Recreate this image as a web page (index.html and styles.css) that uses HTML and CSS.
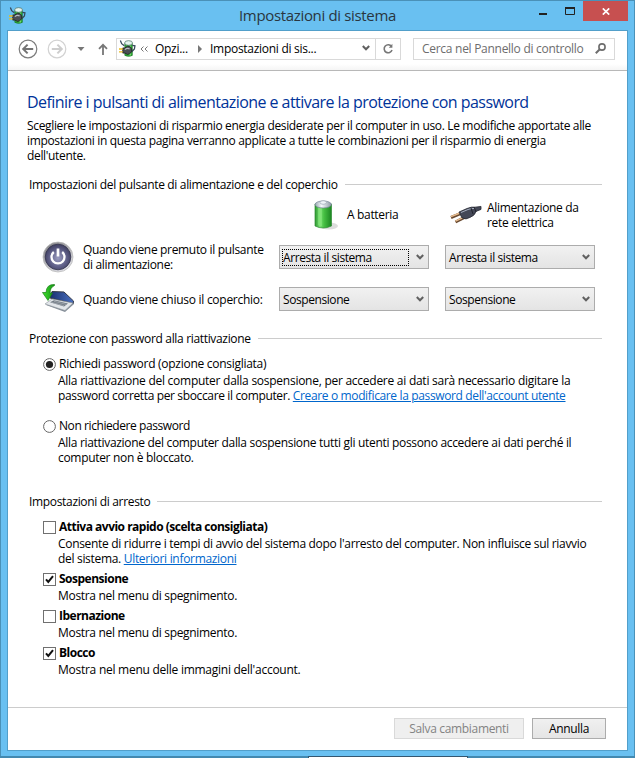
FILE: index.html
```html
<!DOCTYPE html>
<html lang="it">
<head>
<meta charset="utf-8">
<title>Impostazioni di sistema</title>
<link rel="stylesheet" href="styles.css">
</head>
<body>
<svg class="defs" width="0" height="0" aria-hidden="true">
  <defs>
    <linearGradient id="green" x1="0" x2="1"><stop offset="0" stop-color="#2a962e"/><stop offset=".3" stop-color="#7be274"/><stop offset=".55" stop-color="#45bf42"/><stop offset="1" stop-color="#1b8521"/></linearGradient>
    <linearGradient id="steel" x1="0" x2="1"><stop offset="0" stop-color="#9aa7b0"/><stop offset=".4" stop-color="#f4f8fc"/><stop offset="1" stop-color="#8b98a3"/></linearGradient>
    <linearGradient id="ring" x1="0" y1="0" x2=".6" y2="1"><stop offset="0" stop-color="#77777b"/><stop offset="1" stop-color="#dedee4"/></linearGradient>
    <radialGradient id="orb" cx=".5" cy=".55" r=".6"><stop offset="0" stop-color="#9a9cc0"/><stop offset=".6" stop-color="#5c5c84"/><stop offset="1" stop-color="#383858"/></radialGradient>
    <linearGradient id="screen" x1="0" x2="1"><stop offset="0" stop-color="#18306f"/><stop offset="1" stop-color="#4a70c0"/></linearGradient>
    <linearGradient id="arrowfill" x1="0" x2="1"><stop offset="0" stop-color="#3fe02c"/><stop offset="1" stop-color="#159316"/></linearGradient>
    <symbol id="power-plan" viewBox="0 0 16 16">
      <path d="M5.500 3v11.500q3.500 1.800 7 0V3z" fill="#2fb53a" stroke="#14661b" stroke-width=".6"/>
      <path d="M10.500 5.500v9" stroke="#86e57d" stroke-width="1.200"/>
      <ellipse cx="9" cy="2.800" rx="3.700" ry="2.200" fill="#e3f4ee" stroke="#52766a" stroke-width=".7"/>
      <path d="M1.300.500 2.500 3.500 5 5.500M12.500 5l2.500.500-.5 3-2.500 2.500" fill="none" stroke="#36485a" stroke-width="1.200"/>
      <path d="M3.500 7.500h2l2.500-1.700q4 .2 4 3.600t-4 4.200l-2.500-1.300h-2z" fill="#4b4e54" stroke="#222" stroke-width=".8"/>
      <path d="M5.500 9q2.500-2 4.500-.5" fill="none" stroke="#b7bcc1"/>
      <path d="M0 8.500h3.500M0 11.200h3.500" stroke="#e9bb1c" stroke-width="1.300"/>
    </symbol>
    <symbol id="chevron" viewBox="0 0 8 7"><path d="M.8 1 4 4.300 7.200 1" fill="none" stroke="#606060" stroke-width="2"/></symbol>
  </defs>
</svg>
<div class="desktop">
  <div class="window">
    <header class="titlebar">
      <svg class="app-icon" width="17" height="17"><use href="#power-plan"/></svg>
      <h1 class="window-title">Impostazioni di sistema</h1>
      <div class="caption">
        <svg class="min" width="8" height="2"><path d="M0 1h8" stroke="#222" stroke-width="2"/></svg>
        <svg class="max" width="10" height="8"><path d="M.5 1h9v6.500h-9z" fill="none" stroke="#222"/><path d="M0 1h10" stroke="#222" stroke-width="2"/></svg>
        <span class="close"><svg width="8" height="7" viewBox="0 0 8 7"><path d="m.8.4 6.400 6.200M7.200.4.8 6.600" stroke="#fff" stroke-width="1.700"/></svg></span>
      </div>
    </header>
    <div class="client">
      <nav class="navbar">
        <svg width="20" height="20"><circle cx="10" cy="10" r="8.800" fill="none" stroke="#7c7c7c" stroke-width="1.200"/><path d="M15.200 10H5.600M9.600 5.600 5.200 10l4.400 4.400" fill="none" stroke="#737373" stroke-width="2"/></svg>
        <svg class="forward" width="20" height="20"><circle cx="10" cy="10" r="8.800" fill="none" stroke="#d2d2d2" stroke-width="1.200"/><path d="M4.800 10h9.600m-4-4.400 4.400 4.400-4.400 4.400" fill="none" stroke="#cdcdcd" stroke-width="2"/></svg>
        <svg class="history" width="8" height="4"><path d="M.5 0h7L4 4z" fill="#777"/></svg>
        <svg class="up" width="10" height="12"><path d="M5 12V1.800M1 5.800l4-4 4 4" fill="none" stroke="#777" stroke-width="1.800"/></svg>
        <div class="address">
          <svg class="address-icon" width="17" height="17"><use href="#power-plan"/></svg>
          <svg class="more" width="8" height="6"><path d="M3.500.5 1 3l2.500 2.500M7.500.5 5 3l2.500 2.500" fill="none" stroke="#777"/></svg>
          <span class="crumb first">Opzi...</span>
          <svg class="sep" width="4" height="8"><path d="M0 0v8l4-4z" fill="#777"/></svg>
          <span class="crumb second">Impostazioni di sis...</span>
          <svg class="drop" width="8" height="7"><use href="#chevron"/></svg>
          <span class="refresh"><svg width="12" height="12"><path d="M9.500 3.500A4 4 0 1 0 10 7" fill="none" stroke="#777" stroke-width="1.600"/><path d="M6.800 4.800h3.600V.8z" fill="#777"/></svg></span>
        </div>
        <div class="search"><span>Cerca nel Pannello di controllo</span>
          <svg width="11" height="11"><circle cx="7" cy="4" r="3.100" fill="none" stroke="#6d6d6d" stroke-width="1.600"/><path d="M4.800 6.200.8 10.300" stroke="#6d6d6d" stroke-width="2"/></svg>
        </div>
      </nav>
      <main class="content">
        <h2 class="heading">Definire i pulsanti di alimentazione e attivare la protezione con password</h2>
        <p class="intro">Scegliere le impostazioni di risparmio energia desiderate per il computer in uso. Le modifiche apportate alle<br>impostazioni in questa pagina verranno applicate a tutte le combinazioni per il risparmio di energia<br>dell'utente.</p>

        <h3 class="group buttons-group">Impostazioni del pulsante di alimentazione e del coperchio</h3>
        <div class="power-grid">
          <div class="source battery">
            <svg width="26" height="32"><ellipse cx="16" cy="27" rx="9" ry="3.500" fill="#ddd"/><path d="M2 5v22q8 4 16.500 0V5z" fill="url(#green)" stroke="#2e8b34" stroke-width=".7"/><path d="M5 8v18q2 1.200 4 1V9z" fill="#8aea80" opacity=".55"/><ellipse cx="10.200" cy="5.500" rx="8.200" ry="3.500" fill="url(#steel)" stroke="#718293" stroke-width=".7"/><ellipse cx="10.200" cy="3.500" rx="3.200" ry="1.800" fill="#eef3f8" stroke="#8e9cab" stroke-width=".6"/></svg>
            <span>A batteria</span>
          </div>
          <div class="source mains">
            <svg width="33" height="19"><path d="M2 12.500 12 8.300M6.500 17 16 12.200" stroke="#694a31" stroke-width="3"/><path d="m2 11.700 9-3.700M6.500 16.200l9-4.300" stroke="#e9be91" stroke-width="1.400"/><path d="M10 7 18 3.500q5-2 8-1.300l6-.8v3l-5 2q-1 4-6 6l-4 1.500-4-1z" fill="#444857" stroke="#272a34" stroke-width=".8"/><path d="m12 7.500 7-3q4-1.700 7-.9" stroke="#a6aebe" fill="none"/><path d="m22 3 2 6m1-7 2 5" stroke="#20232c"/></svg>
            <span>Alimentazione da<br>rete elettrica</span>
          </div>
          <svg class="row-icon" width="33" height="33"><circle cx="16" cy="16" r="15" fill="url(#ring)" stroke="#bbb" stroke-width=".8"/><circle cx="16" cy="16" r="12.800" fill="url(#orb)" stroke="#35354d" stroke-width=".8"/><path d="M11.800 11a6.500 6.500 0 1 0 8.400 0" fill="none" stroke="#fff" stroke-width="2.300"/><path d="M16 7.500v8" stroke="#fff" stroke-width="2.700"/></svg>
          <span class="row-label">Quando viene premuto il pulsante<br>di alimentazione:</span>
          <div class="select focused"><span>Arresta il sistema</span><svg width="8" height="7"><use href="#chevron"/></svg></div>
          <div class="select"><span>Arresta il sistema</span><svg width="8" height="7"><use href="#chevron"/></svg></div>
          <svg class="row-icon" width="33" height="30"><path d="m4 21 19 7 9-8v-2L11 15z" fill="#858e98"/><path d="m10 7.500 12 .5 9.500 9-.5 2.500L8 14z" fill="url(#screen)" stroke="#343a48"/><path d="m3 20 7-5L31 19l-8 7.500z" fill="#e2e6ea" stroke="#8c949b" stroke-width=".6"/><path d="m8 18.300 4-2 14 3.200-4 3z" fill="#727b85"/><path d="m10 18.500 12 3.200M12 17.300l12 3" stroke="#b4bac1" stroke-width=".6"/><path d="M12.500.5Q4.500 0 4 8.500H.5l5.500 8 4.500-7.500H8Q8 3.500 12.500 1.500z" fill="url(#arrowfill)" stroke="#187d17" stroke-width=".7"/></svg>
          <span class="row-label lid-label">Quando viene chiuso il coperchio:</span>
          <div class="select"><span>Sospensione</span><svg width="8" height="7"><use href="#chevron"/></svg></div>
          <div class="select"><span>Sospensione</span><svg width="8" height="7"><use href="#chevron"/></svg></div>
        </div>

        <h3 class="group password-group">Protezione con password alla riattivazione</h3>
        <div class="option radio-option">
          <svg width="13" height="13"><circle cx="6.500" cy="6.500" r="5.900" fill="#fff" stroke="#666"/><circle cx="6.500" cy="6.500" r="3.600" fill="#222"/></svg>
          <span class="name">Richiedi password (opzione consigliata)</span>
          <p><span class="loose">Alla riattivazione del computer dalla sospensione, per accedere ai dati sarà necessario digitare la</span><br><span class="tight">password corretta per sboccare il computer. <a>Creare o modificare la password dell'account utente</a></span></p>
        </div>
        <div class="option radio-option second-radio">
          <svg width="13" height="13"><circle cx="6.500" cy="6.500" r="5.900" fill="#fff" stroke="#666"/></svg>
          <span class="name">Non richiedere password</span>
          <p>Alla riattivazione del computer dalla sospensione tutti gli utenti possono accedere ai dati perché il<br>computer non è bloccato.</p>
        </div>

        <h3 class="group shutdown-group">Impostazioni di arresto</h3>
        <div class="option check-option">
          <span class="box"></span>
          <span class="name">Attiva avvio rapido (scelta consigliata)</span>
          <p>Consente di ridurre i tempi di avvio del sistema dopo l'arresto del computer. Non influisce sul riavvio<br>del sistema. <a>Ulteriori informazioni</a></p>
        </div>
        <div class="option check-option">
          <span class="box"><svg width="11" height="11"><path d="M2 5.300 4.300 8 9 2.200" fill="none" stroke="#111" stroke-width="2"/></svg></span>
          <span class="name">Sospensione</span>
          <p>Mostra nel menu di spegnimento.</p>
        </div>
        <div class="option check-option">
          <span class="box"></span>
          <span class="name">Ibernazione</span>
          <p>Mostra nel menu di spegnimento.</p>
        </div>
        <div class="option check-option">
          <span class="box"><svg width="11" height="11"><path d="M2 5.300 4.300 8 9 2.200" fill="none" stroke="#111" stroke-width="2"/></svg></span>
          <span class="name">Blocco</span>
          <p class="loose">Mostra nel menu delle immagini dell'account.</p>
        </div>
      </main>
      <footer class="footer">
        <span class="button disabled">Salva cambiamenti</span>
        <span class="button cancel">Annulla</span>
      </footer>
    </div>
  </div>
  <div class="backdrop"><span></span></div>
</div>
</body>
</html>
```
FILE: styles.css
```css
* { box-sizing: border-box; }
body {
  margin: 0;
  font: 12px/15px "Open Sans", "Noto Sans", sans-serif;
  letter-spacing: -0.33px;
  color: #000;
  white-space: nowrap;
}
h1, h2, h3, p { margin: 0; font-weight: 400; font-size: inherit; }
svg { display: block; flex: none; }
.defs { position: absolute; }
.desktop { width: 635px; height: 758px; overflow: hidden; background: #4389b0; }
.window {
  height: 756px;
  padding: 0 6px 5px;
  border: 1px solid #4a91b8;
  border-bottom: 0;
  background: #69c0f1;
}
.titlebar { display: flex; height: 29px; }
.app-icon { margin: 6px 0 0 2px; }
.window-title { flex: 1; padding: 5px 0 0 70px; text-align: center; font-size: 15px; line-height: 18px; letter-spacing: -0.34px; color: #293640; }
.caption { display: flex; }
.min { margin: 12px 18px 0 0; }
.max { margin: 6px 8px 0 0; }
.close { display: grid; place-items: center; width: 45px; height: 20px; padding-top: 1px; background: #c75050; }
.client {
  display: flex;
  flex-direction: column;
  height: 721px;
  border: 1px solid #529fca;
  background: #fff;
}
.navbar { display: flex; align-items: center; height: 40px; padding: 0 12px 4px 10px; border-bottom: 1px solid #b8b8b8; background: linear-gradient(#fff 33px, #f5f5f5 39px); }
.forward { margin-left: 9px; }
.history { margin-left: 10px; }
.up { margin-left: 13px; }
.address { display: flex; align-items: center; width: 285px; height: 22px; margin-left: 8px; border: 1px solid #d9d9d9; background: #fff; }
.address-icon { margin-left: 2px; }
.more { margin-left: 4px; }
.first { width: 43px; margin-left: 7px; }
.sep { margin-right: 8px; }
.crumb { letter-spacing: -0.28px; }
.second { flex: 1; }
.drop { margin-right: 5px; }
.refresh { display: grid; place-items: center; width: 25px; height: 20px; border-left: 1px solid #d9d9d9; }
.search { display: flex; align-items: center; justify-content: space-between; width: 202px; height: 22px; margin-left: auto; padding: 0 8px; border: 1px solid #d9d9d9; color: #6d6d6d; letter-spacing: -0.28px; }
.content { flex: 1; padding: 20px 25px 0 19px; }
.heading { font-size: 16px; line-height: 22px; color: #003399; letter-spacing: -0.55px; }
.intro { margin-top: 5px; letter-spacing: -0.34px; }
.group { display: flex; align-items: center; gap: 7px; margin-left: 2px; }
.group::after { content: ""; flex: 1; height: 1px; background: #ccc; }
.buttons-group { margin-top: 14px; }
.power-grid { display: grid; grid-template-columns: 41px 196px 166px 150px; grid-template-rows: 33px 36px 32px; row-gap: 8px; align-items: center; margin: 6px 0 0 15px; }
.battery { grid-column: 3; padding-left: 34px; gap: 8px; }
.mains { padding-left: 4px; gap: 5px; }
.source { display: flex; align-items: center; }
.lid-label { letter-spacing: -0.27px; }
.select { display: flex; align-items: center; justify-content: space-between; width: 150px; height: 24px; padding: 0 4px 0 3px; border: 1px solid #acacac; background: linear-gradient(#f1f1f1, #e4e4e4); letter-spacing: -0.42px; }
.focused { padding-left: 2px; }
.focused span { width: 127px; height: 17px; padding: 0; border: 1px dotted #000; }
.password-group { margin-top: 16px; }
.option { display: grid; grid-template-columns: 13px 1fr; column-gap: 3px; margin-left: 16px; }
.option .name { line-height: 16px; }
.option > svg, .box { align-self: center; }
.option p { grid-column: 1 / 3; margin-top: 1px; padding-left: 15px; letter-spacing: -0.31px; }
.option .loose { letter-spacing: -0.26px; }
.option .tight { letter-spacing: -0.36px; }
.radio-option { margin-top: 10px; }
.radio-option .name { letter-spacing: -0.28px; }
.second-radio { margin-top: 15px; }
.second-radio .name { letter-spacing: -0.42px; }
.shutdown-group { margin-top: 29px; }
.check-option { margin-top: 5px; }
.check-option .name { font-weight: 700; letter-spacing: -0.5px; }
.shutdown-group + .check-option { margin-top: 10px; }
.box { width: 13px; height: 13px; border: 1px solid #707070; background: #fff; }
a { color: #0066cc; text-decoration: underline; }
.footer { display: flex; justify-content: flex-end; gap: 8px; height: 43px; padding: 10px 21px 0 0; border-top: 1px solid #ccc; }
.button { width: 130px; height: 21px; border: 1px solid #acacac; text-align: center; line-height: 19px; background: linear-gradient(#f0f0f0, #e5e5e5); }
.disabled { border-color: #d9d9d9; background: #efefef; color: #838383; }
.cancel { width: 74px; }
.backdrop { display: flex; height: 2px; padding-left: 308px; }
.backdrop span { width: 160px; border: 1px solid #35566f; border-bottom: 0; background: #fff; }
```
